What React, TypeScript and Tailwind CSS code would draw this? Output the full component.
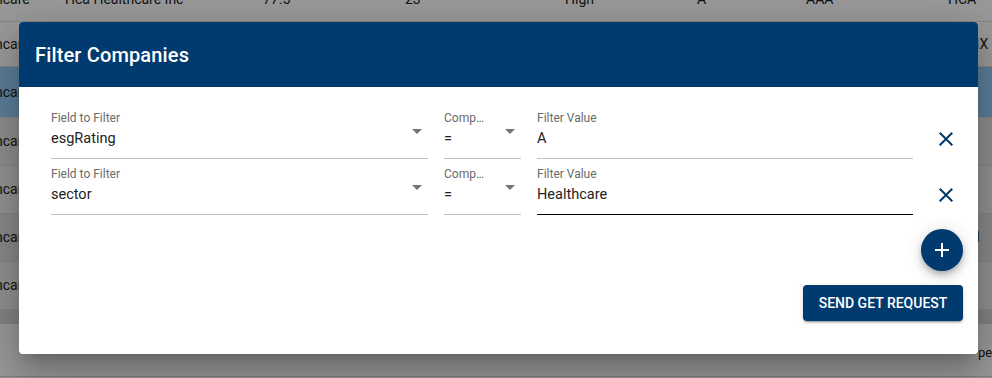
import { useState } from 'react'

type FilterRow = { field: string; comparator: string; value: string; focused?: boolean }

const bgRows = [
  { h: 'h-[44px]', bg: 'bg-white', cells: ['Healthcare', 'Hca Healthcare Inc', '77.5', '23', 'High', 'A', 'AAA', 'HCA'] },
  { h: 'h-[45px]', bg: 'bg-white', cells: ['Healthcare', 'Humana Inc', '71.2', '31', 'Medium', 'A', 'AA', 'HUMX'] },
  { h: 'h-[51px]', bg: 'bg-[#99d2ff]', cells: ['Healthcare', 'Cigna Corp', '68.4', '27', 'High', 'A', 'AA', 'CI'] },
  { h: 'h-[48px]', bg: 'bg-[#ededed]', cells: ['Healthcare', 'Centene Corp', '64.1', '19', 'Low', 'A', 'A', 'CNC'] },
  { h: 'h-[48px]', bg: 'bg-[#f4f4f4]', cells: ['Healthcare', 'Elevance Health', '70.9', '22', 'High', 'A', 'AA', 'ELV'] },
  { h: 'h-[48px]', bg: 'bg-[#e4e4e4]', cells: ['Healthcare', 'Molina Healthcare', '62.3', '18', 'Medium', 'A', 'A', 'MOH'] },
  { h: 'h-[48px]', bg: 'bg-[#f2f2f2]', cells: ['Healthcare', 'UnitedHealth Group', '75.0', '25', 'High', 'A', 'AAA', 'UNH'] },
]

function ArrowDrop() {
  return (
    <svg viewBox="0 0 10 5" className="absolute right-[6px] top-[2px] w-[10px] h-[5px] fill-[#757575]">
      <path d="M0 0l5 5 5-5z" />
    </svg>
  )
}

function CloseIcon() {
  return (
    <svg viewBox="0 0 24 24" className="w-6 h-6 fill-[#013a6f]">
      <path d="M19 6.41L17.59 5 12 10.59 6.41 5 5 6.41 10.59 12 5 17.59 6.41 19 12 13.41 17.59 19 19 17.59 13.41 12z" />
    </svg>
  )
}

function Field({ label, value, select, focused, width }: { label: string; value: string; select?: boolean; focused?: boolean; width: string }) {
  return (
    <div className={`${width} h-[48px] flex flex-col ${focused ? 'border-b border-black' : 'border-b border-[#c2c2c2]'}`}>
      <div className="h-[14px] text-[12px] leading-[14px] text-[#6b6b6b] truncate pr-[33px]">{label}</div>
      <div className="relative mt-[2px] h-6 text-[14.5px] leading-6 text-[#222]">
        {value}
        {select && <ArrowDrop />}
      </div>
    </div>
  )
}

export default function App() {
  const [rows] = useState<FilterRow[]>([
    { field: 'esgRating', comparator: '=', value: 'A' },
    { field: 'sector', comparator: '=', value: 'Healthcare', focused: true },
  ])

  return (
    <div className="relative h-[378px] w-[992px] overflow-hidden bg-white font-['Roboto',sans-serif]">
      {/* table behind the dialog */}
      <div className="-mt-[22px] flex flex-col">
        {bgRows.map((r, i) => (
          <div key={i} className={`${r.h} ${r.bg} border-b border-[#e0e0e0] flex items-center text-[14px] text-[#222] whitespace-nowrap`}>
            <div className="w-[103px] shrink-0 -ml-[38px]">{r.cells[0]}</div>
            <div className="w-[198px] shrink-0">{r.cells[1]}</div>
            <div className="w-[142px] shrink-0">{r.cells[2]}</div>
            <div className="w-[160px] shrink-0">{r.cells[3]}</div>
            <div className="w-[132px] shrink-0">{r.cells[4]}</div>
            <div className="w-[109px] shrink-0">{r.cells[5]}</div>
            <div className="w-[142px] shrink-0">{r.cells[6]}</div>
            <div className="w-[60px] shrink-0">{r.cells[7]}</div>
          </div>
        ))}
        <div className="h-[14px] bg-[#dcdcdc]" />
        <div className="h-[53px] border-b border-[#d6d6d6] flex items-end justify-end pb-[14px] text-[13px] text-[#222]">
          <span className="-mr-[66px] w-[80px]">per page:</span>
        </div>
      </div>

      {/* modal overlay */}
      <div className="absolute inset-0 bg-black/40">
        <div className="absolute left-[19px] top-[22px] w-[959px] h-[332px] bg-white rounded-[4px] overflow-hidden shadow-[0_11px_15px_-7px_rgba(0,0,0,0.2),0_24px_38px_3px_rgba(0,0,0,0.14),0_9px_46px_8px_rgba(0,0,0,0.12)]">
          <div className="h-[65px] bg-[#013a6f] flex items-center px-4">
            <h2 className="text-[20px] font-medium text-white tracking-[0.15px]">Filter Companies</h2>
          </div>
          <div className="pl-8 pr-[15px] pt-6">
            <div className="flex flex-col gap-2">
              {rows.map((row, i) => (
                <div key={i} className="flex items-start">
                  <Field width="w-[377px]" label="Field to Filter" value={row.field} select />
                  <div className="w-4" />
                  <Field width="w-[77px]" label="Comparator" value={row.comparator} select />
                  <div className="w-4" />
                  <Field width="w-[376px]" label="Filter Value" value={row.value} focused={row.focused} />
                  <div className="ml-[21px] mt-4">
                    <CloseIcon />
                  </div>
                </div>
              ))}
            </div>
            <div className="flex justify-end mt-[14px]">
              <button className="w-[42px] h-[42px] rounded-full bg-[#013a6f] flex items-center justify-center shadow-[0_3px_5px_-1px_rgba(0,0,0,0.2),0_6px_10px_0_rgba(0,0,0,0.14),0_1px_18px_0_rgba(0,0,0,0.12)]">
                <svg viewBox="0 0 24 24" className="w-6 h-6 fill-white">
                  <path d="M19 13h-6v6h-2v-6H5v-2h6V5h2v6h6v2z" />
                </svg>
              </button>
            </div>
            <div className="flex justify-end mt-[14px]">
              <button className="w-[160px] h-9 rounded-[4px] bg-[#013a6f] text-white text-[14px] font-medium uppercase tracking-normal shadow-[0_3px_1px_-2px_rgba(0,0,0,0.2),0_2px_2px_0_rgba(0,0,0,0.14),0_1px_5px_0_rgba(0,0,0,0.12)]">
                Send GET Request
              </button>
            </div>
          </div>
        </div>
      </div>
    </div>
  )
}
